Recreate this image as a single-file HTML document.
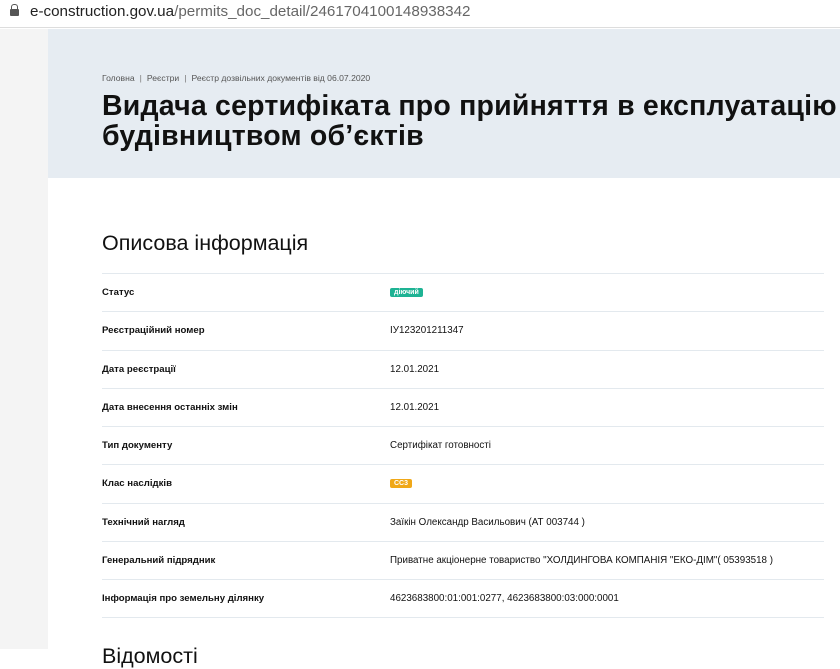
<!DOCTYPE html>
<html><head><meta charset="utf-8"><style>
*{margin:0;padding:0;box-sizing:border-box}
body{width:840px;height:649px;overflow:hidden;background:#fff;font-family:"Liberation Sans",sans-serif;position:relative}
.url{position:absolute;left:0;top:0;width:840px;height:28px;background:#fff;border-bottom:1px solid #ddd}
.url .t{position:absolute;left:30px;top:3px;font-size:15.2px;color:#222}
.url .t span{color:#666}
.lock{position:absolute;left:10px;top:9px;width:9px;height:7px;background:#555;border-radius:1px}
.lock:before{content:"";position:absolute;left:1px;top:-5px;width:5px;height:5px;border:1.5px solid #555;border-bottom:none;border-radius:3px 3px 0 0}
.side{position:absolute;left:0;top:29px;width:48px;height:620px;background:#f4f4f4}
.hdr{position:absolute;left:48px;top:29px;width:792px;height:149px;background:#e6ecf2}
.bc{position:absolute;left:102px;top:73px;font-size:8.6px;color:#555}
.bc i{font-style:normal;margin:0 5px;color:#777}
h1{position:absolute;left:102px;top:91px;font-size:28.5px;line-height:30px;font-weight:bold;color:#111;white-space:nowrap;letter-spacing:0.2px}
h2{position:absolute;left:102px;top:231px;font-size:21.5px;font-weight:normal;color:#111}
.rows{position:absolute;left:102px;top:273px;width:722px}
.r{height:38.3px;border-top:1px solid #e3e9ee;position:relative;font-size:9.6px;color:#111}
.r .k{position:absolute;left:0;top:13px;font-weight:bold}
.r .v{position:absolute;left:288px;top:13px;font-size:9.8px}
.b{display:inline-block;color:#fff;font-size:7px;font-weight:bold;padding:1px 4px;border-radius:2px;position:relative;top:-1px}
h3{position:absolute;left:102px;top:644px;font-size:21.5px;font-weight:normal;color:#111}
</style></head><body>
<div class="url"><div class="lock"></div><div class="t">e-construction.gov.ua<span>/permits_doc_detail/2461704100148938342</span></div></div>
<div class="side"></div>
<div class="hdr"></div>
<div class="bc">Головна<i>|</i>Реєстри<i>|</i>Реєстр дозвільних документів від 06.07.2020</div>
<h1>Видача сертифіката про прийняття в експлуатацію<br>будівництвом об’єктів</h1>
<h2>Описова інформація</h2>
<div class="rows">
<div class="r"><div class="k">Статус</div><div class="v"><span class="b" style="background:#1eb394">діючий</span></div></div>
<div class="r"><div class="k">Реєстраційний номер</div><div class="v">ІУ123201211347</div></div>
<div class="r"><div class="k">Дата реєстрації</div><div class="v">12.01.2021</div></div>
<div class="r"><div class="k">Дата внесення останніх змін</div><div class="v">12.01.2021</div></div>
<div class="r"><div class="k">Тип документу</div><div class="v">Сертифікат готовності</div></div>
<div class="r"><div class="k">Клас наслідків</div><div class="v"><span class="b" style="background:#f0a818">СС3</span></div></div>
<div class="r"><div class="k">Технічний нагляд</div><div class="v">Заїкін Олександр Васильович (АТ 003744 )</div></div>
<div class="r"><div class="k">Генеральний підрядник</div><div class="v">Приватне акціонерне товариство "ХОЛДИНГОВА КОМПАНІЯ "ЕКО-ДІМ"( 05393518 )</div></div>
<div class="r" style="border-bottom:1px solid #e3e9ee"><div class="k">Інформація про земельну ділянку</div><div class="v">4623683800:01:001:0277, 4623683800:03:000:0001</div></div>
</div>
<h3>Відомості</h3>
</body></html>
